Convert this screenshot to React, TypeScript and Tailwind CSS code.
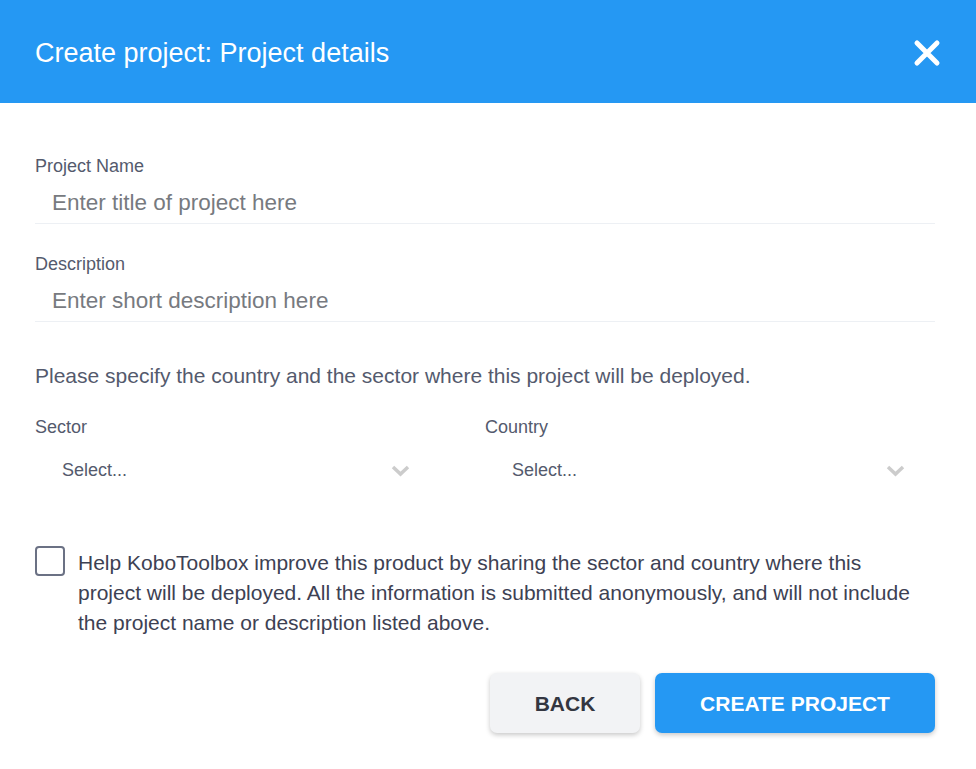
export default function App() {
  return (
    <div className="min-h-screen bg-white font-['Liberation_Sans',Arial,sans-serif]">
      <div className="flex h-[103px] items-center justify-between bg-[#2598f3] pl-[35px] pr-[34px] pt-[3px]">
        <h1 className="text-[27px] leading-none text-white">Create project: Project details</h1>
        <button className="flex h-[30px] w-[30px] items-center justify-center" aria-label="Close">
          <svg width="28" height="28" viewBox="0 0 28 28" fill="none">
            <path d="M4 4L24 24M24 4L4 24" stroke="white" strokeWidth="5" strokeLinecap="round" />
          </svg>
        </button>
      </div>

      <div className="pl-[35px] pr-[41px] pt-[54px]">
        <Field label="Project Name" placeholder="Enter title of project here" />
        <div className="h-[31px]" />
        <Field label="Description" placeholder="Enter short description here" />

        <p className="mt-[43px] text-[21px] leading-none text-[#545a6d]">
          Please specify the country and the sector where this project will be deployed.
        </p>

        <div className="mt-[32px] flex">
          <div className="w-1/2 pr-[45px]">
            <SelectBox label="Sector" />
          </div>
          <div className="w-1/2">
            <SelectBox label="Country" />
          </div>
        </div>

        <label className="mt-[55px] flex items-start gap-[13px] pr-[14px]">
          <span className="mt-[-2px] h-[30px] w-[30px] shrink-0 rounded-[4px] border-2 border-[#6b7184]" />
          <span className="text-[21px] leading-[30px] text-[#3d4153]">
            Help KoboToolbox improve this product by sharing the sector and country where this project will be
            deployed. All the information is submitted anonymously, and will not include the project name or
            description listed above.
          </span>
        </label>

        <div className="mt-[35px] flex justify-end gap-[15px]">
          <button className="h-[60px] w-[150px] rounded-[7px] bg-[#f2f3f5] pt-[2px] text-[21px] font-bold text-[#333641] shadow-[0_2px_5px_rgba(0,0,0,0.22)]">
            BACK
          </button>
          <button className="h-[60px] w-[280px] rounded-[7px] bg-[#2598f3] pt-[2px] text-[21px] font-bold text-white shadow-[0_2px_5px_rgba(0,0,0,0.22)]">
            CREATE PROJECT
          </button>
        </div>
      </div>
    </div>
  );
}

function Field({ label, placeholder }: { label: string; placeholder: string }) {
  return (
    <div>
      <div className="text-[18px] leading-none text-[#545a6d]">{label}</div>
      <input
        className="mt-[4px] h-[45px] w-full border-b border-[#edf0f4] pl-[17px] pt-[3px] text-[22.5px] text-[#333] outline-none placeholder:text-[#777a80]"
        placeholder={placeholder}
      />
    </div>
  );
}

function SelectBox({ label }: { label: string }) {
  return (
    <div>
      <div className="text-[18px] leading-none text-[#545a6d]">{label}</div>
      <div className="mt-[11px] flex h-[46px] items-center justify-between pl-[27px] pr-[30px]">
        <span className="text-[18px] text-[#545a6d]">Select...</span>
        <svg width="19" height="13" viewBox="0 0 19 13" fill="none">
          <path d="M2 3L9.5 10L17 3" stroke="#cccccc" strokeWidth="3.5" />
        </svg>
      </div>
    </div>
  );
}
